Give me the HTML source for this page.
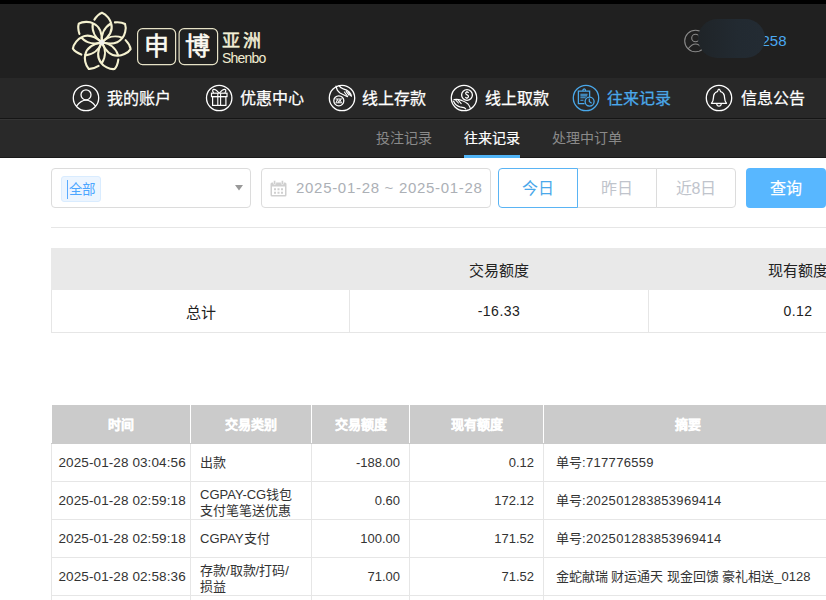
<!DOCTYPE html>
<html lang="zh-CN">
<head>
<meta charset="utf-8">
<style>
*{margin:0;padding:0;box-sizing:border-box}
html,body{width:826px;height:600px;overflow:hidden;background:#fff;font-family:"Liberation Sans",sans-serif}
.abs{position:absolute}
#top{position:absolute;left:0;top:0;width:826px;height:4px;background:#000}
#hdr{position:absolute;left:0;top:4px;width:826px;height:74px;background:#202020}
#nav{position:absolute;left:0;top:78px;width:826px;height:40px;background:#282828}
#navl1{position:absolute;left:0;top:118px;width:826px;height:1px;background:#151515}
#navl2{position:absolute;left:0;top:119px;width:826px;height:1px;background:#353535}
#sub{position:absolute;left:0;top:120px;width:826px;height:37px;background:#292929}
#subl{position:absolute;left:0;top:157px;width:826px;height:1px;background:#1a1a1a}
.nt{position:absolute;top:88px;font-size:16px;line-height:22px;color:#fff;white-space:nowrap;-webkit-text-stroke:0.25px currentColor}
.st{position:absolute;top:128px;font-size:14px;line-height:20px;color:#8a8a8a;white-space:nowrap}
.ic{position:absolute;top:84px;width:28px;height:28px}
.box{position:absolute;border:1px solid #dcdcdc;border-radius:4px;background:#fff}
.btn{position:absolute;top:168px;height:40px;width:80px;border:1px solid #dcdcdc;font-size:16px;line-height:40px;text-align:center;color:#c0c4cc;background:#fff}
table{border-collapse:collapse;table-layout:fixed}
#sum{position:absolute;left:51px;top:248px;width:896px}
#sum td{border:1px solid #e6e6e6;text-align:center;font-size:15px;color:#222}
#sum tr.r td{font-size:14px;letter-spacing:0.5px}
#sum tr.r td:first-child{font-size:15px;letter-spacing:0}
#sum tr.h td{background:#e9e9e9;height:41px;border-color:#e9e9e9;font-size:15px}
#sum tr.r td{height:43px}
#main{position:absolute;left:51px;top:405px;width:780px}
#main th{background:#cbcbcb;color:#fff;font-weight:bold;-webkit-text-stroke:0.25px #fff;font-size:13px;height:38px;border-left:1px solid #fff;border-right:1px solid #fff;border-bottom:1px solid #cbcbcb}
#main td{border:1px solid #e6e6e6;font-size:13px;color:#333;height:38px;padding:2px 9px 0 9px;line-height:15.5px;white-space:nowrap}
#main td:first-child{padding-left:6.5px;letter-spacing:0.1px;font-size:13.5px}
#main td.s{padding-left:11.5px}
#main td.n{letter-spacing:0.3px}
#main td.r{text-align:right}
#main td.t{font-size:13px;line-height:16px}
#main td.m div{position:relative;top:2px}
</style>
</head>
<body>
<div id="top"></div>
<div id="hdr"></div>
<div id="nav"></div>
<div id="navl1"></div>
<div id="navl2"></div>
<div id="sub"></div>
<div id="subl"></div>

<!-- logo flower -->
<svg class="abs" style="left:0;top:0" width="300" height="78" viewBox="0 0 300 78">
  
  <g transform="translate(101.8 42.3)">
    <path d="M0 0 C5.5 -4 11.6 -10.5 9.5 -18.5 C8.9 -22 5 -28 0.2 -29.6 Q-4 -28 -7.4 -22.7 M0 0 C-0.8 -7 2 -14.5 9 -18.8" fill="none" stroke="#f5f2d0" stroke-width="2.1" stroke-linecap="round" stroke-linejoin="miter" transform="rotate(0)"/>
    <path d="M0 0 C5.5 -4 11.6 -10.5 9.5 -18.5 C8.9 -22 5 -28 0.2 -29.6 Q-4 -28 -7.4 -22.7 M0 0 C-0.8 -7 2 -14.5 9 -18.8" fill="none" stroke="#f5f2d0" stroke-width="2.1" stroke-linecap="round" stroke-linejoin="miter" transform="rotate(51.43)"/>
    <path d="M0 0 C5.5 -4 11.6 -10.5 9.5 -18.5 C8.9 -22 5 -28 0.2 -29.6 Q-4 -28 -7.4 -22.7 M0 0 C-0.8 -7 2 -14.5 9 -18.8" fill="none" stroke="#f5f2d0" stroke-width="2.1" stroke-linecap="round" stroke-linejoin="miter" transform="rotate(102.86)"/>
    <path d="M0 0 C5.5 -4 11.6 -10.5 9.5 -18.5 C8.9 -22 5 -28 0.2 -29.6 Q-4 -28 -7.4 -22.7 M0 0 C-0.8 -7 2 -14.5 9 -18.8" fill="none" stroke="#f5f2d0" stroke-width="2.1" stroke-linecap="round" stroke-linejoin="miter" transform="rotate(154.29)"/>
    <path d="M0 0 C5.5 -4 11.6 -10.5 9.5 -18.5 C8.9 -22 5 -28 0.2 -29.6 Q-4 -28 -7.4 -22.7 M0 0 C-0.8 -7 2 -14.5 9 -18.8" fill="none" stroke="#f5f2d0" stroke-width="2.1" stroke-linecap="round" stroke-linejoin="miter" transform="rotate(205.71)"/>
    <path d="M0 0 C5.5 -4 11.6 -10.5 9.5 -18.5 C8.9 -22 5 -28 0.2 -29.6 Q-4 -28 -7.4 -22.7 M0 0 C-0.8 -7 2 -14.5 9 -18.8" fill="none" stroke="#f5f2d0" stroke-width="2.1" stroke-linecap="round" stroke-linejoin="miter" transform="rotate(257.14)"/>
    <path d="M0 0 C5.5 -4 11.6 -10.5 9.5 -18.5 C8.9 -22 5 -28 0.2 -29.6 Q-4 -28 -7.4 -22.7 M0 0 C-0.8 -7 2 -14.5 9 -18.8" fill="none" stroke="#f5f2d0" stroke-width="2.1" stroke-linecap="round" stroke-linejoin="miter" transform="rotate(308.57)"/>
    <circle r="2.6" fill="#f0f0ec"/>
  </g>
  <rect x="137.6" y="28.6" width="38" height="36" rx="5" fill="none" stroke="#e6e2c6" stroke-width="1.2"/>
  <rect x="179.1" y="28.6" width="38.5" height="36" rx="5" fill="none" stroke="#e6e2c6" stroke-width="1.2"/>
</svg>
<div class="abs" style="left:144px;top:28px;font-size:25px;line-height:36px;color:#fbfaf2;-webkit-text-stroke:0.6px #fbfaf2">申</div>
<div class="abs" style="left:185px;top:28px;font-size:25px;line-height:36px;color:#fbfaf2;-webkit-text-stroke:0.6px #fbfaf2">博</div>
<div class="abs" style="left:222px;top:29px;font-size:18px;line-height:24px;color:#f3f0d6;letter-spacing:2.5px;-webkit-text-stroke:0.5px #f3f0d6">亚洲</div>
<div class="abs" style="left:222px;top:50px;font-size:14px;line-height:16px;color:#f1edd2;letter-spacing:-0.8px">Shenbo</div>

<!-- user -->
<svg class="abs" style="left:680px;top:25px" width="30" height="32" viewBox="0 0 30 32">
  <circle cx="15.5" cy="16" r="10.8" fill="none" stroke="#8a8a8a" stroke-width="1.1"/>
  <circle cx="15.5" cy="13" r="3.8" fill="none" stroke="#8a8a8a" stroke-width="1.1"/>
  <path d="M8 24 Q15.5 14 23 24" fill="none" stroke="#8a8a8a" stroke-width="1.1"/>
</svg>
<div class="abs" style="left:698px;top:19px;width:67px;height:39px;border-radius:19.5px;background:linear-gradient(90deg,#1f2428,#222a31 60%,#232b33);z-index:3;filter:blur(0.7px)"></div>
<div class="abs" style="left:761.5px;top:31px;font-size:15px;line-height:20px;color:#4aa8f2">258</div>

<!-- nav icons -->
<svg class="ic" style="left:72px" viewBox="0 0 28 28">
  <circle cx="14" cy="14" r="12.7" fill="none" stroke="#fff" stroke-width="1.3"/>
  <circle cx="14" cy="10.8" r="5" fill="none" stroke="#fff" stroke-width="1.3"/>
  <path d="M4.3 22.3 Q14 10 23.7 22.3" fill="none" stroke="#fff" stroke-width="1.3"/>
</svg>
<div class="nt" style="left:107px">我的账户</div>

<svg class="ic" style="left:205px" viewBox="0 0 28 28">
  <circle cx="14.2" cy="14" r="12.7" fill="none" stroke="#fff" stroke-width="1.3"/>
  <rect x="6.5" y="9.2" width="15.5" height="3.4" fill="none" stroke="#fff" stroke-width="1.2"/>
  <rect x="7.6" y="12.6" width="13.3" height="8.8" fill="none" stroke="#fff" stroke-width="1.2"/>
  <path d="M12.8 9.2 V21.4 M15.6 9.2 V21.4" fill="none" stroke="#fff" stroke-width="1.1"/>
  <path d="M14 9 C12 6.5 10 5.2 8.6 5.4 C7.2 5.8 7.4 7.8 8.8 8.9 M14.5 9 C16.5 6.5 18.5 5.2 19.9 5.4 C21.3 5.8 21.1 7.8 19.7 8.9" fill="none" stroke="#fff" stroke-width="1.2" stroke-linejoin="round"/>
</svg>
<div class="nt" style="left:240px">优惠中心</div>

<svg class="ic" style="left:328px" viewBox="0 0 28 28">
  <circle cx="14" cy="14" r="12.7" fill="none" stroke="#fff" stroke-width="1.3"/>
  <circle cx="10.8" cy="16.8" r="5" fill="none" stroke="#fff" stroke-width="1.3"/>
  <path d="M7.6 15 H14 M7.6 18.8 H14 M8.2 18.6 L9.4 15.4 L10.8 18.6 L12.1 15.4 L13.3 18.6" fill="none" stroke="#fff" stroke-width="1"/>
  <path d="M8 2.2 Q8.6 6.6 12 9 Q15 10.6 18 12 L19.6 12.6" fill="none" stroke="#fff" stroke-width="1.2" stroke-linecap="round"/>
  <path d="M11 1.6 Q12.4 4 15.2 4.8 Q19 5.8 21.2 8 Q23.2 10.2 23.4 12.2" fill="none" stroke="#fff" stroke-width="1.2" stroke-linecap="round"/>
  <path d="M16.4 8 L19.2 11.8 M18.2 7.4 L21 11.2 M20.2 7.8 L22.8 11.6" fill="none" stroke="#fff" stroke-width="1.1" stroke-linecap="round"/>
</svg>
<div class="nt" style="left:362px">线上存款</div>

<svg class="ic" style="left:450px" viewBox="0 0 28 28">
  <circle cx="14" cy="14" r="12.7" fill="none" stroke="#fff" stroke-width="1.3"/>
  <circle cx="17" cy="11" r="5.4" fill="none" stroke="#fff" stroke-width="1.3"/>
  <path d="M18.6 8.9 Q18.2 8 17 8 Q15.6 8.1 15.7 9.3 Q15.9 10.4 17.2 10.9 Q18.6 11.5 18.5 12.7 Q18.3 14 17 14 Q15.8 14 15.4 13.1 M17 7 V8 M17 14 V15" fill="none" stroke="#fff" stroke-width="1.2"/>
  <path d="M4 15.6 Q6.5 15 8.8 15.6 Q11 16.2 12.4 16.8 Q15.6 18 18 20 Q19.6 22 20.4 24.4" fill="none" stroke="#fff" stroke-width="1.2" stroke-linecap="round"/>
  <path d="M3.6 17.2 Q4.6 19.6 6 20.8 Q8 22.4 10 22.8 Q13 23.2 14 23.6 L15.6 24.8" fill="none" stroke="#fff" stroke-width="1.2" stroke-linecap="round"/>
  <path d="M5.8 16.2 L8.4 19 M8 15.8 L11.2 19.6" fill="none" stroke="#fff" stroke-width="1.1" stroke-linecap="round"/>
</svg>
<div class="nt" style="left:485px">线上取款</div>

<svg class="ic" style="left:572px" viewBox="0 0 28 28">
  <circle cx="14" cy="14" r="12.7" fill="none" stroke="#4aa8ea" stroke-width="1.3"/>
  <g transform="translate(0.5 0)">
  <path d="M12 19.6 H5.9 V7.2 H17.1 V12.9" fill="none" stroke="#4aa8ea" stroke-width="1.3"/>
  <path d="M10.3 7 Q10.3 4.9 11.7 4.9 Q13.1 4.9 13.1 7" fill="none" stroke="#4aa8ea" stroke-width="1.2"/>
  <path d="M7.9 10.3 H15.1 M7.9 11.9 H14.8 M7.9 13.7 H13.2 M7.9 16.2 H11" fill="none" stroke="#4aa8ea" stroke-width="1.1"/>
  <circle cx="17.1" cy="17.6" r="4.5" fill="#282828" stroke="#4aa8ea" stroke-width="1.3"/>
  <path d="M16.8 14.6 V17.5 L19.1 19.3" fill="none" stroke="#4aa8ea" stroke-width="1.2"/>
  </g>
</svg>
<div class="nt" style="left:607px;color:#4aa8ea">往来记录</div>

<svg class="ic" style="left:705px" viewBox="0 0 28 28">
  <circle cx="14" cy="14" r="12.7" fill="none" stroke="#fff" stroke-width="1.3"/>
  <path d="M6.5 19.3 H21.5 Q19.8 17.8 19.6 14 Q19.6 11 18.4 9.5 Q17.2 7.8 15.6 7.6 Q14.8 5.2 14 5.2 Q13.2 5.2 12.4 7.6 Q10.8 7.8 9.6 9.5 Q8.4 11 8.4 14 Q8.2 17.8 6.5 19.3 Z" fill="none" stroke="#fff" stroke-width="1.3" stroke-linejoin="round"/>
  <path d="M11.6 19.5 Q12 22.2 14 22.2 Q16 22.2 16.4 19.5" fill="none" stroke="#fff" stroke-width="1.2"/>
</svg>
<div class="nt" style="left:741px">信息公告</div>

<!-- sub nav -->
<div class="st" style="left:376px">投注记录</div>
<div class="st" style="left:464px;color:#fff;-webkit-text-stroke:0.2px #fff">往来记录</div>
<div class="st" style="left:552px">处理中订单</div>
<div class="abs" style="left:464px;top:155px;width:56px;height:3px;background:#50b4f6"></div>

<!-- filter -->
<div class="box" style="left:51px;top:168px;width:200px;height:40px"></div>
<div class="abs" style="left:61px;top:176px;width:40px;height:26px;background:#ecf5ff;border:1px solid #d9ecff;border-radius:3px"></div>
<div class="abs" style="left:67px;top:180px;width:1px;height:19px;background:#5aabff"></div>
<div class="abs" style="left:68.5px;top:181px;font-size:13.5px;line-height:18px;color:#4da6ff">全部</div>
<svg class="abs" style="left:234px;top:184px" width="10" height="8" viewBox="0 0 10 8"><path d="M1 1 H9 L5 6.5 Z" fill="#999"/></svg>

<div class="box" style="left:261px;top:168px;width:230px;height:40px"></div>
<svg class="abs" style="left:270px;top:180px" width="17" height="17" viewBox="0 0 17 17">
  <rect x="0.5" y="2.5" width="16" height="14" rx="1.5" fill="#cfcfcf"/>
  <rect x="2" y="6.5" width="13" height="8.5" fill="#fff"/>
  <rect x="3.5" y="0.5" width="2.2" height="4" rx="1" fill="#cfcfcf" stroke="#fff" stroke-width="0.6"/>
  <rect x="11.3" y="0.5" width="2.2" height="4" rx="1" fill="#cfcfcf" stroke="#fff" stroke-width="0.6"/>
  <path d="M4 8.3h2v2h-2zM7.5 8.3h2v2h-2zM11 8.3h2v2h-2zM4 11.8h2v2h-2zM7.5 11.8h2v2h-2zM11 11.8h2v2h-2z" fill="#cfcfcf"/>
</svg>
<div class="abs" style="left:296px;top:178px;font-size:15px;line-height:20px;color:#acb0b6;letter-spacing:0.7px">2025-01-28 ~ 2025-01-28</div>

<div class="btn" style="left:498px;border-color:#5ab4f4;color:#4aa8ea;border-radius:4px 0 0 4px;z-index:2">今日</div>
<div class="btn" style="left:577px">昨日</div>
<div class="btn" style="left:656px;border-radius:0 4px 4px 0">近8日</div>
<div class="abs" style="left:746px;top:168px;width:80px;height:40px;background:#58b7ff;border-radius:4px;color:#fff;font-size:16px;line-height:41px;text-align:center;-webkit-text-stroke:0.2px #fff">查询</div>

<div class="abs" style="left:51px;top:227px;width:775px;height:1px;background:#e6e6e6"></div>

<!-- summary -->
<table id="sum">
<colgroup><col style="width:298px"><col style="width:299px"><col style="width:299px"></colgroup>
<tr class="h"><td></td><td>交易额度</td><td>现有额度</td></tr>
<tr class="r"><td>总计</td><td>-16.33</td><td>0.12</td></tr>
</table>

<!-- main table -->
<table id="main">
<colgroup><col style="width:139px"><col style="width:121px"><col style="width:98px"><col style="width:134px"><col style="width:288px"></colgroup>
<tr><th>时间</th><th>交易类别</th><th>交易额度</th><th>现有额度</th><th>摘要</th></tr>
<tr><td>2025-01-28 03:04:56</td><td class="t">出款</td><td class="r">-188.00</td><td class="r">0.12</td><td class="s n">单号:717776559</td></tr>
<tr><td>2025-01-28 02:59:18</td><td class="t m"><div>CGPAY-CG钱包<br>支付笔笔送优惠</div></td><td class="r">0.60</td><td class="r">172.12</td><td class="s n">单号:202501283853969414</td></tr>
<tr><td>2025-01-28 02:59:18</td><td class="t">CGPAY支付</td><td class="r">100.00</td><td class="r">171.52</td><td class="s n">单号:202501283853969414</td></tr>
<tr><td>2025-01-28 02:58:36</td><td class="t m"><div>存款/取款/打码/<br>损益</div></td><td class="r">71.00</td><td class="r">71.52</td><td class="s">金蛇献瑞 财运通天 现金回馈 豪礼相送_0128</td></tr>
<tr><td></td><td></td><td></td><td></td><td class="s"></td></tr>
</table>
</body>
</html>
